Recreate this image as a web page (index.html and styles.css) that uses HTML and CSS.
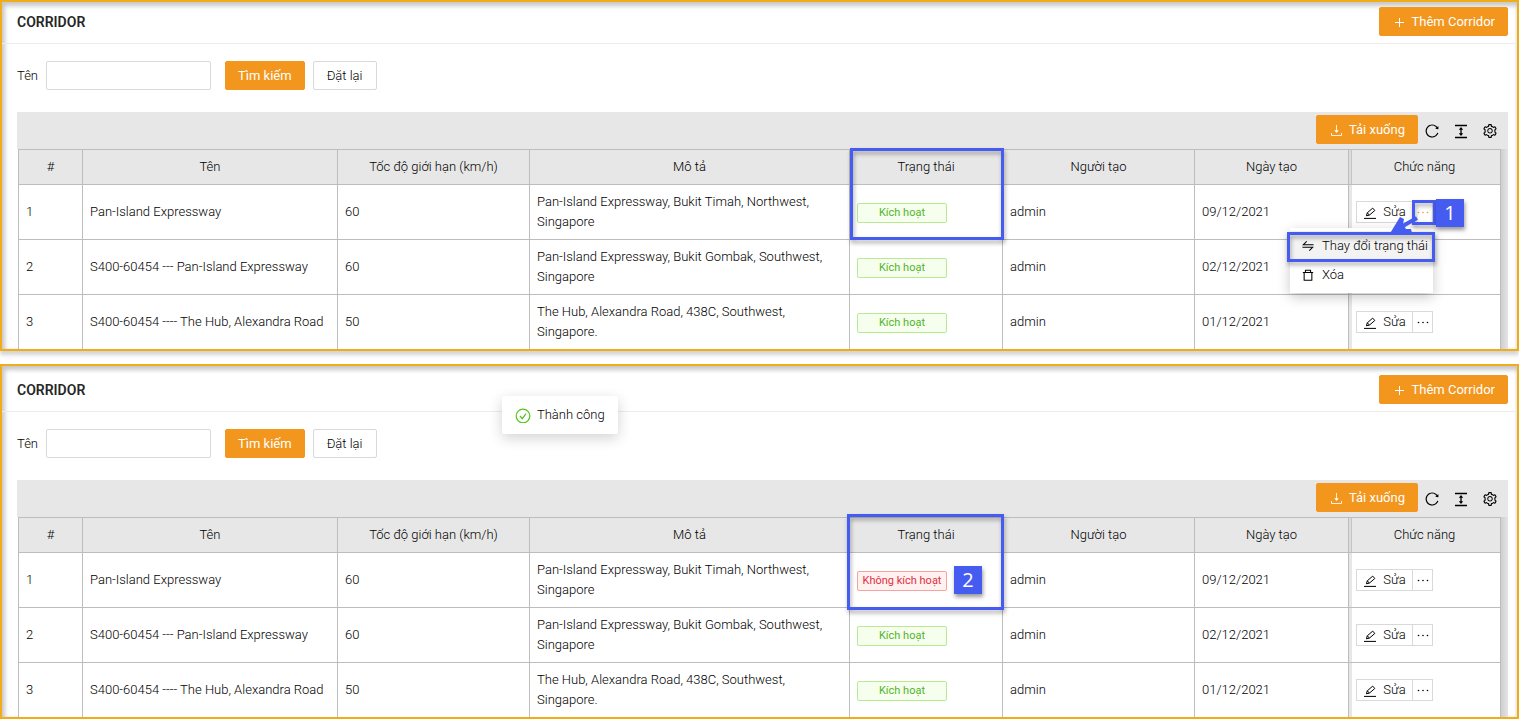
FILE: index.html
```html
<!DOCTYPE html>
<html lang="vi">
<head>
<meta charset="utf-8">
<title>Corridor</title>
<link rel="stylesheet" href="styles.css">
</head>
<body>
<svg class="sprite" aria-hidden="true">
  <symbol id="i-plus" viewBox="0 0 14 14"><path d="M7.500 3v9M3 7.500h9" fill="none" stroke="currentColor" stroke-width="1"/></symbol>
  <symbol id="i-download" viewBox="0 0 14 14"><path d="M7.500 2v7M2.500 10v2.500h10V10" fill="none" stroke="currentColor" stroke-width="1" opacity=".85"/><path d="M5.300 7.200h4.400L7.500 10z" fill="currentColor"/></symbol>
  <symbol id="i-reload" viewBox="0 0 1024 1024"><path fill="currentColor" d="M909.1 209.3l-56.4 44.1C775.8 155.1 656.2 92 521.9 92 290 92 102.3 279.5 102 511.5 101.7 743.7 289.8 932 521.9 932c181.3 0 335.8-115 394.6-276.1 1.500-4.200-.7-8.900-4.900-10.300l-56.700-19.500a8 8 0 00-10.100 4.800c-1.800 5-3.800 10-5.900 14.900-17.300 41-42.100 77.800-73.700 109.400A344.770 344.770 0 01655.900 829c-42.300 17.900-87.400 27-133.800 27-46.500 0-91.500-9.100-133.800-27A341.500 341.500 0 01279 755.200a342.160 342.160 0 01-73.700-109.400c-17.900-42.400-27-87.400-27-133.900s9.100-91.500 27-133.900c17.300-41 42.100-77.800 73.700-109.400 31.600-31.600 68.400-56.400 109.300-73.800 42.300-17.900 87.400-27 133.800-27 46.500 0 91.500 9.100 133.800 27a341.500 341.500 0 01109.300 73.800c9.900 9.900 19.200 20.400 27.800 31.400l-60.200 47a8 8 0 003 14.100l175.600 43c5 1.200 9.900-2.600 9.900-7.700l.8-180.900c-.1-6.600-7.800-10.300-13-6.200z"/></symbol>
  <symbol id="i-height" viewBox="0 0 16 16"><path d="M2 2.500h12M2 14.500h12M8 5v7" fill="none" stroke="currentColor" stroke-width="1.300"/><path d="M5.800 6.700L8 4l2.200 2.700zM5.800 10.300L8 13l2.200-2.700z" fill="currentColor"/></symbol>
  <symbol id="i-setting" viewBox="0 0 1024 1024"><path fill="currentColor" d="M924.8 625.7l-65.5-56c3.1-19 4.7-38.4 4.7-57.8s-1.6-38.8-4.7-57.8l65.5-56a32.03 32.03 0 009.3-35.2l-.9-2.6a443.74 443.74 0 00-79.7-137.9l-1.8-2.1a32.12 32.12 0 00-35.1-9.5l-81.3 28.900c-30-24.600-63.500-44-99.700-57.600l-15.700-85a32.050 32.050 0 00-25.800-25.700l-2.700-.5c-52.100-9.400-106.900-9.400-159 0l-2.700.5a32.050 32.050 0 00-25.800 25.700l-15.800 85.400a351.860 351.860 0 00-99 57.400l-81.900-29.100a32 32 0 00-35.100 9.500l-1.800 2.100a446.020 446.020 0 00-79.700 137.900l-.9 2.600c-4.500 12.500-.8 26.500 9.300 35.200l66.300 56.600c-3.100 18.800-4.600 38-4.600 57.100 0 19.200 1.500 38.400 4.600 57.100L99 625.500a32.030 32.030 0 00-9.300 35.200l.9 2.600c18.100 50.400 44.900 96.900 79.700 137.900l1.800 2.100a32.120 32.120 0 0035.100 9.500l81.900-29.100c29.800 24.500 63.100 43.900 99 57.400l15.800 85.400a32.050 32.050 0 0025.800 25.700l2.700.5a449.400 449.400 0 00159 0l2.700-.5a32.050 32.050 0 0025.800-25.700l15.700-85a350 350 0 0099.700-57.600l81.300 28.900a32 32 0 0035.100-9.500l1.800-2.100c34.800-41.100 61.600-87.500 79.700-137.900l.9-2.600c4.500-12.300.8-26.300-9.300-35zM788.300 465.900c2.500 15.100 3.800 30.600 3.800 46.100s-1.300 31-3.800 46.100l-6.600 40.100 74.700 63.900a370.030 370.030 0 01-42.600 73.600L721 702.800l-31.400 25.800c-23.900 19.600-50.500 35-79.300 45.800l-38.100 14.300-17.900 97a377.500 377.500 0 01-85 0l-17.900-97.200-37.800-14.500c-28.500-10.800-55-26.200-78.700-45.700l-31.400-25.900-93.400 33.200c-17-22.900-31.200-47.600-42.600-73.600l75.500-64.500-6.500-40c-2.400-14.900-3.700-30.300-3.700-45.500 0-15.300 1.200-30.600 3.700-45.500l6.500-40-75.500-64.500c11.300-26.100 25.600-50.700 42.600-73.600l93.400 33.200 31.400-25.900c23.700-19.500 50.200-34.900 78.700-45.700l37.900-14.300 17.900-97.200c28.100-3.200 56.800-3.200 85 0l17.900 97 38.100 14.300c28.700 10.800 55.400 26.200 79.300 45.800l31.400 25.800 92.800-32.900c17 22.900 31.200 47.600 42.600 73.600L781.800 426l6.500 39.900zM512 326c-97.200 0-176 78.800-176 176s78.800 176 176 176 176-78.800 176-176-78.800-176-176-176zm79.200 255.200A111.600 111.600 0 01512 614c-29.900 0-58-11.700-79.200-32.800A111.600 111.600 0 01400 502c0-29.900 11.700-58 32.800-79.200C454 401.600 482.100 390 512 390c29.900 0 58 11.600 79.200 32.800A111.600 111.600 0 01624 502c0 29.900-11.700 58-32.800 79.200z"/></symbol>
  <symbol id="i-edit" viewBox="0 0 14 14"><path d="M1 13.400h12M3.400 10.800l.9-3 5.400-4.700 2.100 2.400-5.400 4.600zM4.300 7.800l2.100 2.300" fill="none" stroke="currentColor" stroke-width="1" stroke-linejoin="round"/></symbol>
  <symbol id="i-more" viewBox="0 0 14 14"><circle cx="2.500" cy="7.500" r=".8" fill="currentColor"/><circle cx="7" cy="7.500" r=".8" fill="currentColor"/><circle cx="11.500" cy="7.500" r=".8" fill="currentColor"/></symbol>
  <symbol id="i-swap" viewBox="0 0 14 14"><path d="M13.500 5.500H1.500L5.500 1.500M.5 8.500h12L8.500 12.500" fill="none" stroke="currentColor" stroke-width="1.200"/></symbol>
  <symbol id="i-trash" viewBox="0 0 14 14"><path d="M1 4h12M4 4V1.500h6V4M2.500 4v9h9V4" fill="none" stroke="currentColor" stroke-width="1.200" stroke-linejoin="round"/></symbol>
  <symbol id="i-check" viewBox="0 0 16 16"><circle cx="8" cy="9" r="6.800" fill="none" stroke="currentColor" stroke-width="1.200"/><path d="M5 9l2.300 2.700L11 6.700" fill="none" stroke="currentColor" stroke-width="1.200"/></symbol>
</svg>

<main class="page">
  <section class="panel panel-before">
    <header class="panel-header">
      <h1 class="title">CORRIDOR</h1>
      <button class="btn btn-primary" type="button"><svg class="icon"><use href="#i-plus"/></svg>Thêm Corridor</button>
    </header>
    <form class="search">
      <label class="search-label" for="name-a">Tên</label>
      <input class="search-input" id="name-a" type="text">
      <button class="btn btn-primary" type="button">Tìm kiếm</button>
      <button class="btn" type="button">Đặt lại</button>
    </form>
    <div class="toolbar">
      <button class="btn btn-primary" type="button"><svg class="icon"><use href="#i-download"/></svg>Tải xuống</button>
      <button class="tool" type="button" aria-label="Tải lại"><svg class="icon-lg"><use href="#i-reload"/></svg></button>
      <button class="tool" type="button" aria-label="Mật độ"><svg class="icon-lg"><use href="#i-height"/></svg></button>
      <button class="tool" type="button" aria-label="Cài đặt"><svg class="icon-lg"><use href="#i-setting"/></svg></button>
    </div>
    <div class="table-wrap">
      <table class="grid">
        <colgroup><col class="c-index"><col class="c-name"><col class="c-speed"><col class="c-desc"><col class="c-status"><col class="c-user"><col class="c-date"><col class="c-action"></colgroup>
        <thead><tr><th>#</th><th>Tên</th><th>Tốc độ giới hạn (km/h)</th><th>Mô tả</th><th class="marked">Trạng thái<span class="mark mark-column"></span></th><th>Người tạo</th><th>Ngày tạo</th><th>Chức năng</th></tr></thead>
        <tbody>
          <tr><td>1</td><td>Pan-Island Expressway</td><td>60</td><td>Pan-Island Expressway, Bukit Timah, Northwest, Singapore</td><td><span class="tag">Kích hoạt</span></td><td>admin</td><td>09/12/2021</td>
            <td><div class="actions"><button class="edit" type="button"><svg class="icon"><use href="#i-edit"/></svg>Sửa</button><button class="more more-open" type="button" aria-label="Thêm"><svg class="icon"><use href="#i-more"/></svg></button>
              <div class="menu">
                <button class="menu-item menu-hover" type="button"><svg class="icon-sm"><use href="#i-swap"/></svg>Thay đổi trạng thái</button>
                <button class="menu-item" type="button"><svg class="icon-sm"><use href="#i-trash"/></svg>Xóa</button>
              </div>
              <span class="mark mark-item"></span>
              <span class="mark mark-more"></span>
              <svg class="arrow" viewBox="0 0 30 24"><path d="M28 3L12 12" stroke="#465cf0" stroke-width="4"/><path d="M0 20L11 2l4 2-1 5 3 5 5 0 1 4z" fill="#465cf0"/></svg>
              <span class="step step-one">1</span>
            </div></td></tr>
          <tr><td>2</td><td>S400-60454 --- Pan-Island Expressway</td><td>60</td><td>Pan-Island Expressway, Bukit Gombak, Southwest, Singapore</td><td><span class="tag">Kích hoạt</span></td><td>admin</td><td>02/12/2021</td><td></td></tr>
          <tr><td>3</td><td>S400-60454 ---- The Hub, Alexandra Road</td><td>50</td><td>The Hub, Alexandra Road, 438C, Southwest, Singapore.</td><td><span class="tag">Kích hoạt</span></td><td>admin</td><td>01/12/2021</td>
            <td><div class="actions"><button class="edit" type="button"><svg class="icon"><use href="#i-edit"/></svg>Sửa</button><button class="more" type="button" aria-label="Thêm"><svg class="icon"><use href="#i-more"/></svg></button></div></td></tr>
        </tbody>
      </table>
      <div class="gutter"></div>
    </div>
  </section>

  <section class="panel panel-after">
    <header class="panel-header">
      <h2 class="title">CORRIDOR</h2>
      <button class="btn btn-primary" type="button"><svg class="icon"><use href="#i-plus"/></svg>Thêm Corridor</button>
    </header>
    <div class="toast" role="status"><svg class="icon-lg toast-icon"><use href="#i-check"/></svg>Thành công</div>
    <form class="search">
      <label class="search-label" for="name-b">Tên</label>
      <input class="search-input" id="name-b" type="text">
      <button class="btn btn-primary" type="button">Tìm kiếm</button>
      <button class="btn" type="button">Đặt lại</button>
    </form>
    <div class="toolbar">
      <button class="btn btn-primary" type="button"><svg class="icon"><use href="#i-download"/></svg>Tải xuống</button>
      <button class="tool" type="button" aria-label="Tải lại"><svg class="icon-lg"><use href="#i-reload"/></svg></button>
      <button class="tool" type="button" aria-label="Mật độ"><svg class="icon-lg"><use href="#i-height"/></svg></button>
      <button class="tool" type="button" aria-label="Cài đặt"><svg class="icon-lg"><use href="#i-setting"/></svg></button>
    </div>
    <div class="table-wrap">
      <table class="grid">
        <colgroup><col class="c-index"><col class="c-name"><col class="c-speed"><col class="c-desc"><col class="c-status"><col class="c-user"><col class="c-date"><col class="c-action"></colgroup>
        <thead><tr><th>#</th><th>Tên</th><th>Tốc độ giới hạn (km/h)</th><th>Mô tả</th><th class="marked">Trạng thái<span class="mark mark-column mark-wide"></span><span class="step step-two">2</span></th><th>Người tạo</th><th>Ngày tạo</th><th>Chức năng</th></tr></thead>
        <tbody>
          <tr><td>1</td><td>Pan-Island Expressway</td><td>60</td><td>Pan-Island Expressway, Bukit Timah, Northwest, Singapore</td><td><span class="tag tag-off">Không kích hoạt</span></td><td>admin</td><td>09/12/2021</td>
            <td><div class="actions"><button class="edit" type="button"><svg class="icon"><use href="#i-edit"/></svg>Sửa</button><button class="more" type="button" aria-label="Thêm"><svg class="icon"><use href="#i-more"/></svg></button></div></td></tr>
          <tr><td>2</td><td>S400-60454 --- Pan-Island Expressway</td><td>60</td><td>Pan-Island Expressway, Bukit Gombak, Southwest, Singapore</td><td><span class="tag">Kích hoạt</span></td><td>admin</td><td>02/12/2021</td>
            <td><div class="actions"><button class="edit" type="button"><svg class="icon"><use href="#i-edit"/></svg>Sửa</button><button class="more" type="button" aria-label="Thêm"><svg class="icon"><use href="#i-more"/></svg></button></div></td></tr>
          <tr><td>3</td><td>S400-60454 ---- The Hub, Alexandra Road</td><td>50</td><td>The Hub, Alexandra Road, 438C, Southwest, Singapore.</td><td><span class="tag">Kích hoạt</span></td><td>admin</td><td>01/12/2021</td>
            <td><div class="actions"><button class="edit" type="button"><svg class="icon"><use href="#i-edit"/></svg>Sửa</button><button class="more" type="button" aria-label="Thêm"><svg class="icon"><use href="#i-more"/></svg></button></div></td></tr>
        </tbody>
      </table>
      <div class="gutter"></div>
    </div>
  </section>
</main>
</body>
</html>
```

FILE: styles.css
```css
* { box-sizing: border-box; }
body { margin: 0; background: #fff; color: #000; font: 300 13px/20px Roboto, "Noto Sans", sans-serif; }
button, input { font: inherit; color: inherit; }
.sprite { position: absolute; width: 0; height: 0; }
.icon { width: 14px; height: 14px; flex: none; }
.icon-sm { width: 12px; height: 12px; flex: none; }
.icon-lg { width: 16px; height: 16px; flex: none; }

.page { display: flex; flex-direction: column; gap: 13px; }
.panel { position: relative; border: 2px solid #f0ad18; box-shadow: 0 4px 4px #d4d4d4, inset 3px 4px 4px #c8c8c8, inset -1px 0 3px #ddd; }
.panel-header { display: flex; align-items: center; justify-content: space-between; padding: 5px 9px 7px 15px; border-bottom: 1px solid #ececec; }
.panel-after .panel-header { padding-top: 9px; }
.title { margin: 0; color: #262626; font-size: 14px; line-height: 20px; font-weight: 600; }

.btn { display: flex; align-items: center; justify-content: center; gap: 6px; height: 29px; padding: 0 13px; border: 1px solid #d9d9d9; border-radius: 2px; background: #fff; white-space: nowrap; }
.btn-primary { padding: 0 12px; border-color: #f2961e; background: #f2961e; color: #fff; font-weight: 400; }

.search { display: flex; align-items: center; padding: 17px 15px 22px; }
.search-label { width: 29px; }
.search-input { width: 165px; height: 29px; padding: 0 8px; margin-right: 14px; border: 1px solid #d9d9d9; border-radius: 2px; background: #fff; }
.search .btn-primary { margin-right: 8px; }

.toolbar { display: flex; align-items: center; justify-content: flex-end; margin: 0 9px 0 15px; padding: 3px 10px 5px 0; background: #e7e7e7; }
.tool { display: flex; width: 16px; height: 16px; margin: 2px 0 0 13px; padding: 0; border: 0; background: none; }
.toolbar .btn + .tool { margin-left: 6px; }

.table-wrap { display: flex; margin: 0 9px 0 16px; }
.grid { flex: 1; width: 0; table-layout: fixed; border-collapse: separate; border-spacing: 0; border-top: 1px solid #bdbdbd; border-left: 1px solid #bdbdbd; background: #fff; }
.c-index { width: 64px; }
.c-name { width: 255px; }
.c-speed, .c-user { width: 192px; }
.c-status { width: 153px; }
.c-date { width: 154px; }
.c-action { width: 152px; }
.grid th, .grid td { border-right: 1px solid #bdbdbd; border-bottom: 1px solid #bdbdbd; padding: 7px; text-align: left; font-weight: inherit; }
.grid th { background: #e7e7e7; text-align: center; }
.grid td { height: 55px; }
.grid tbody tr:last-child td { height: 54px; border-bottom: 0; }
.grid td:last-child { box-shadow: inset 3px 0 #e7e7e7; }
.grid th:last-child { box-shadow: inset 2px 0 #dcdcdc, inset 3px 0 #c4c4c4; }
.gutter { width: 7px; background: linear-gradient(90deg, #cfcfcf, #e4e4e4); }

.tag { display: block; width: 90px; height: 20px; margin-top: 2px; border: 1px solid #b7eb8f; border-radius: 2px; background: #f6ffed; color: #52b42a; font-size: 11px; font-weight: 400; line-height: 18px; text-align: center; white-space: nowrap; }
.tag-off { border-color: #f5a3a0; background: #fff1f0; color: #e02f3c; }

.actions { position: relative; display: flex; }
.edit, .more { display: flex; align-items: center; justify-content: center; height: 22px; padding: 0; border: 1px solid #d9d9d9; background: #fff; }
.edit { gap: 6px; width: 57px; }
.more { width: 21px; margin-left: -1px; }
.more-open { color: #f2961e; }

.menu { position: absolute; z-index: 2; top: 27px; right: 60px; width: 143px; height: 65px; padding-top: 3px; background: #fff; box-shadow: 0 4px 12px rgba(0, 0, 0, .22); }
.menu-item { display: flex; align-items: center; gap: 8px; width: 100%; height: 29px; padding: 0 12px; border: 0; background: #fff; white-space: nowrap; }
.menu-hover { background: #f3f3f3; }

.marked { position: relative; }
.mark { position: absolute; z-index: 3; border: 3px solid #465cf0; filter: drop-shadow(1px 3px 2px rgba(0, 0, 0, .35)); }
.mark-column { top: -2px; right: -2px; bottom: -56px; left: 0; }
.mark-wide { top: -4px; bottom: -58px; left: -3px; }
.mark-item { top: 31px; right: 58px; width: 148px; height: 30px; }
.mark-more { top: -1px; left: 56px; width: 24px; height: 25px; }
.arrow { position: absolute; z-index: 4; top: 14px; left: 33px; width: 30px; height: 24px; }
.step { position: absolute; z-index: 4; width: 28px; height: 28px; background: #465cf0; color: #fff; font: 20px/28px "Open Sans", sans-serif; text-align: center; box-shadow: 1px 3px 4px rgba(0, 0, 0, .4); }
.step-one { top: -2px; left: 80px; }
.step-two { top: 48px; left: 104px; }

.toast { position: absolute; z-index: 2; top: 30px; left: 33%; display: flex; align-items: center; gap: 6px; height: 38px; padding: 0 13px; border-radius: 2px; background: #fff; box-shadow: 0 4px 14px rgba(0, 0, 0, .18); }
.toast-icon { color: #52c41a; }
```
